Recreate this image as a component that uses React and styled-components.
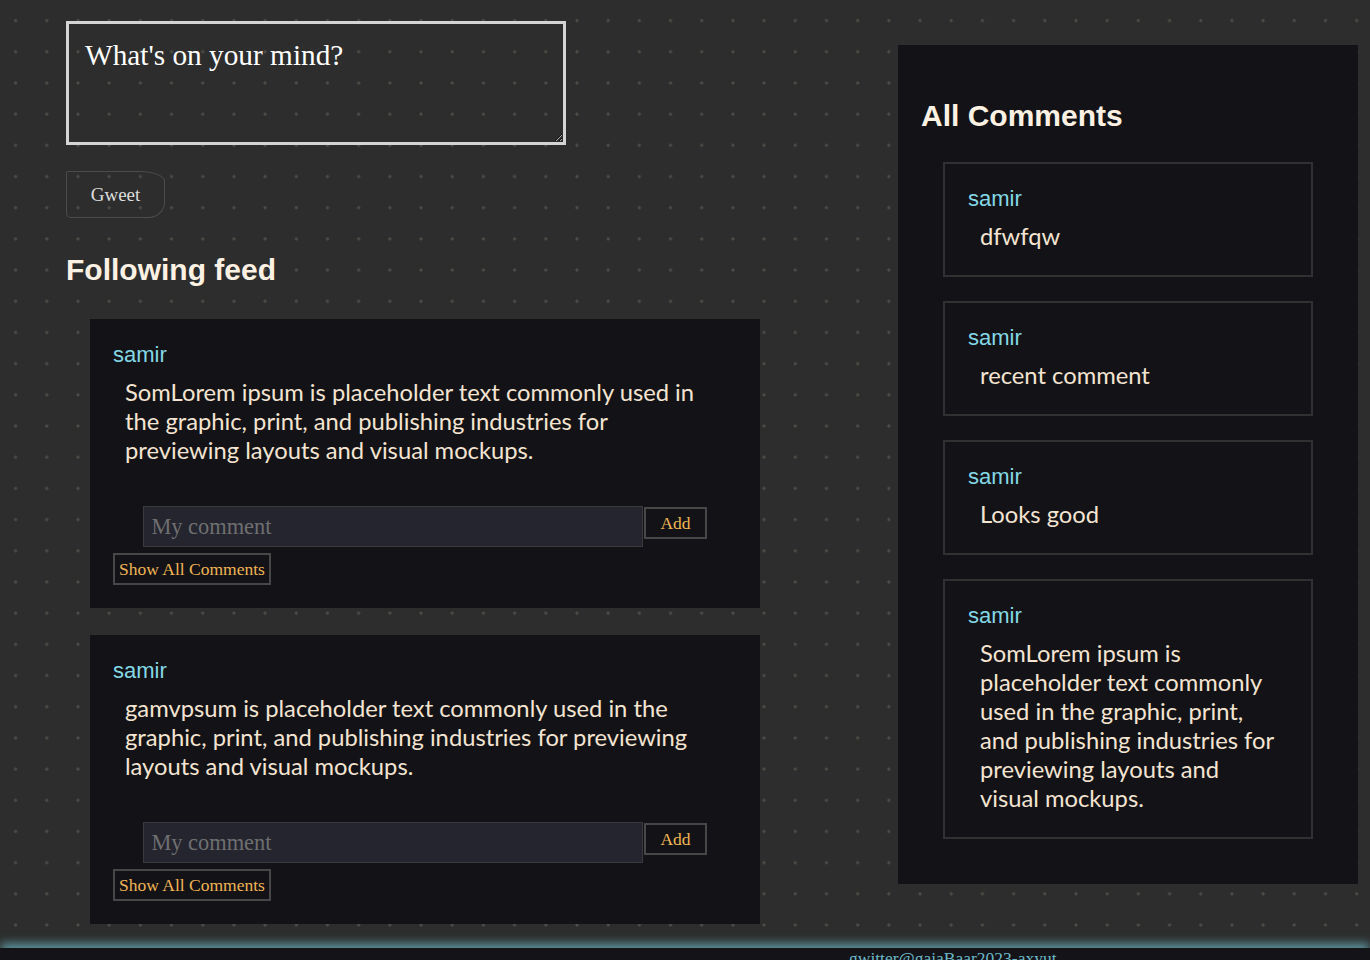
import React from 'react';
import styled, { createGlobalStyle } from 'styled-components';

const GlobalStyle = createGlobalStyle`
  html, body {
    margin: 0;
    padding: 0;
  }
  body {
    background-color: #2d2d2d;
    background-image: radial-gradient(circle at center, #4d4e47 1.2px, transparent 1.9px);
    background-size: 31.2px 31.2px;
    background-position: 0 5px;
    font-family: "Liberation Serif", serif;
    overflow-x: hidden;
  }
`;

const Page = styled.div`
  display: grid;
  grid-template-columns: 694px 460px;
  column-gap: 138px;
  padding: 21px 0 0 66px;
  align-items: start;
`;

const LeftColumn = styled.div`
  display: flex;
  flex-direction: column;
  align-items: flex-start;
  padding-bottom: 24px;
`;

const PostBox = styled.textarea`
  box-sizing: border-box;
  width: 500px;
  height: 124px;
  padding: 15px 16px;
  margin: 0;
  background: transparent;
  border: 3px solid #d4d4d4;
  color: #fff;
  font-family: "Liberation Serif", serif;
  font-size: 29.3px;
  outline: none;

  &::placeholder {
    color: #fff;
    opacity: 1;
  }
`;

const GweetButton = styled.button`
  margin-top: 26px;
  width: 99px;
  height: 47px;
  background: transparent;
  color: #dedede;
  border: 1.5px solid #4c4c4c;
  border-radius: 2px 26px 16px 5px / 2px 10px 16px 5px;
  font-family: "Liberation Serif", serif;
  font-size: 19px;
  cursor: pointer;
`;

const Heading = styled.h2`
  margin: ${(p) => p.$margin};
  font-family: "Liberation Sans", Arial, sans-serif;
  font-weight: 700;
  font-size: 30px;
  color: #fdf1e4;
`;

const Feed = styled.div`
  display: flex;
  flex-direction: column;
  gap: 27px;
  margin-left: 24px;
  width: 670px;
`;

const Card = styled.div`
  background: #131317;
  padding: 23px;
`;

const Username = styled.div`
  font-family: "Liberation Sans", Arial, sans-serif;
  font-size: 22px;
  color: #84d8e6;
`;

const Body = styled.p`
  margin: 10px 12px 0;
  font-family: Lato, "Noto Sans", sans-serif;
  font-size: 23.75px;
  line-height: 29px;
  color: #f4e4d2;
`;

const CommentForm = styled.form`
  display: flex;
  justify-content: center;
  align-items: flex-start;
  margin-top: 41px;
`;

const CommentInput = styled.input`
  box-sizing: border-box;
  width: 500px;
  height: 41px;
  padding: 0 7px;
  background: #24252f;
  border: 1px solid #393a3d;
  color: #ddd;
  font-family: "Liberation Serif", serif;
  font-size: 22.4px;
  outline: none;

  &::placeholder {
    color: #6f6f6f;
  }
`;

const GoldButton = styled.button`
  box-sizing: border-box;
  height: 32px;
  margin: ${(p) => p.$margin || '0'};
  padding: 0 ${(p) => p.$padX || 4}px;
  background: #131317;
  border: 2px solid #474747;
  color: #f0b555;
  font-family: "Liberation Serif", serif;
  font-size: 17.5px;
  cursor: pointer;
`;

const CommentsPanel = styled.aside`
  margin-top: 24px;
  background: #131317;
  padding: 54px 23px 45px;
`;

const CommentList = styled.div`
  display: flex;
  flex-direction: column;
  gap: 24px;
  margin: 29px 22px 0;
`;

const CommentBox = styled.div`
  border: 2px solid #313131;
  padding: 22px 23px 24px;
`;

const Footer = styled.footer`
  background: #131318;
  box-shadow: 0 -6px 10px -1px rgba(104, 176, 186, 0.75);
  color: #6cb8c6;
  font-family: "Liberation Serif", serif;
  font-size: 17.5px;
  line-height: 17px;
  padding: 2px 0 12px 849px;
`;

const posts = [
  {
    user: 'samir',
    text: 'SomLorem ipsum is placeholder text commonly used in the graphic, print, and publishing industries for previewing layouts and visual mockups.',
  },
  {
    user: 'samir',
    text: 'gamvpsum is placeholder text commonly used in the graphic, print, and publishing industries for previewing layouts and visual mockups.',
  },
];

const comments = [
  { user: 'samir', text: 'dfwfqw' },
  { user: 'samir', text: 'recent comment' },
  { user: 'samir', text: 'Looks good' },
  {
    user: 'samir',
    text: 'SomLorem ipsum is placeholder text commonly used in the graphic, print, and publishing industries for previewing layouts and visual mockups.',
  },
];

const App = () => {
  return (
    <>
      <GlobalStyle />
      <Page>
        <LeftColumn>
          <PostBox placeholder="What's on your mind?" />
          <GweetButton>Gweet</GweetButton>
          <Heading $margin="35px 0 32px">Following feed</Heading>
          <Feed>
            {posts.map((post, i) => (
              <Card key={i}>
                <Username>{post.user}</Username>
                <Body>{post.text}</Body>
                <CommentForm onSubmit={(e) => e.preventDefault()}>
                  <CommentInput placeholder="My comment" />
                  <GoldButton type="submit" $padX={14} $margin="1px 0 0 1px">
                    Add
                  </GoldButton>
                </CommentForm>
                <GoldButton $margin="6px 0 0">Show All Comments</GoldButton>
              </Card>
            ))}
          </Feed>
        </LeftColumn>
        <CommentsPanel>
          <Heading $margin="0">All Comments</Heading>
          <CommentList>
            {comments.map((c, i) => (
              <CommentBox key={i}>
                <Username>{c.user}</Username>
                <Body>{c.text}</Body>
              </CommentBox>
            ))}
          </CommentList>
        </CommentsPanel>
      </Page>
      <Footer>gwitter@gaiaBaar2023-axyut</Footer>
    </>
  );
};

export default App;
